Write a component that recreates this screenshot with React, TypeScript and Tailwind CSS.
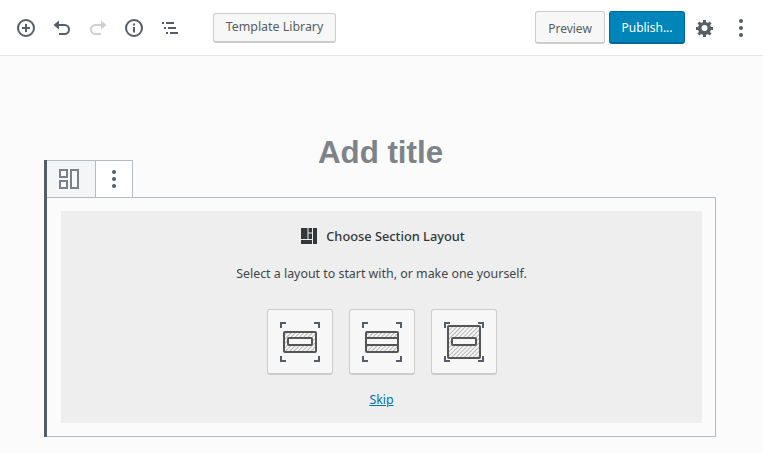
import type { ReactNode } from "react";

const baseFont = "font-['Noto_Sans','Open_Sans',sans-serif]";
const layoutButtonClassName =
  "flex h-[66px] w-[66px] items-center justify-center rounded-[3px] border border-[#cccccc] border-b-2 bg-[#f7f7f7]";

const Corners = () => (
  <g fill="none" stroke="#555d66" strokeWidth="2">
    <path d="M1 6V1H6" />
    <path d="M34 1H39V6" />
    <path d="M1 34V39H6" />
    <path d="M34 39H39V34" />
  </g>
);

const Hatch = ({ id }: { id: string }) => (
  <defs>
    <pattern id={id} width="3" height="3" patternUnits="userSpaceOnUse" patternTransform="rotate(45)">
      <rect width="3" height="3" fill="#f7f7f7" />
      <rect width="1" height="3" fill="#b4b4b4" />
    </pattern>
  </defs>
);

const ContainedIcon = () => (
  <svg width="40" height="40" viewBox="0 0 40 40">
    <Hatch id="hatch-a" />
    <Corners />
    <rect x="4" y="10" width="32" height="20" rx="1" fill="url(#hatch-a)" stroke="#555555" strokeWidth="2" />
    <rect x="8" y="16" width="24" height="7" rx="1" fill="#f7f7f7" stroke="#555555" strokeWidth="2" />
  </svg>
);

const WideIcon = () => (
  <svg width="40" height="40" viewBox="0 0 40 40">
    <Hatch id="hatch-b" />
    <Corners />
    <rect x="4" y="10" width="32" height="20" rx="1" fill="url(#hatch-b)" stroke="#555555" strokeWidth="2" />
    <rect x="4" y="16" width="32" height="7" fill="#f7f7f7" stroke="#555555" strokeWidth="2" />
  </svg>
);

const FullIcon = () => (
  <svg width="40" height="40" viewBox="0 0 40 40">
    <Hatch id="hatch-c" />
    <Corners />
    <rect x="4" y="4" width="32" height="32" rx="1" fill="url(#hatch-c)" stroke="#555555" strokeWidth="2" />
    <rect x="8" y="16" width="24" height="7" rx="1" fill="#f7f7f7" stroke="#555555" strokeWidth="2" />
  </svg>
);

const ToolbarIcon = ({ children, color = "#555d66" }: { children: ReactNode; color?: string }) => (
  <svg width="20" height="20" viewBox="0 0 20 20" fill="none" stroke={color} strokeWidth="2">
    {children}
  </svg>
);

const Kebab = () => (
  <svg width="4" height="18" viewBox="0 0 4 18" fill="#555d66">
    <circle cx="2" cy="2" r="2" />
    <circle cx="2" cy="9" r="2" />
    <circle cx="2" cy="16" r="2" />
  </svg>
);

export default function App() {
  return (
    <div className={`${baseFont} flex h-[453px] w-[763px] flex-col overflow-hidden bg-[#fbfbfb]`}>
      <header className="flex h-[56px] shrink-0 items-center border-b border-[#e2e4e7] bg-white pl-4 pr-[20px]">
        <div className="flex w-[197px] items-center gap-[16px]">
          <ToolbarIcon>
            <circle cx="10" cy="10" r="8" />
            <path d="M10 6v8M6 10h8" />
          </ToolbarIcon>
          <ToolbarIcon>
            <path d="M6 7h6.500a4.500 4.500 0 0 1 0 9H7" />
            <path d="M7 2.500v9L1.500 7z" fill="#555d66" stroke="none" />
          </ToolbarIcon>
          <ToolbarIcon color="#ccd0d4">
            <path d="M14 7H7.500a4.500 4.500 0 0 0 0 9H13" />
            <path d="M13 2.500v9L18.500 7z" fill="#ccd0d4" stroke="none" />
          </ToolbarIcon>
          <ToolbarIcon>
            <circle cx="10" cy="10" r="8" />
            <path d="M10 9v5.500M10 5.500v2" />
          </ToolbarIcon>
          <ToolbarIcon>
            <path d="M2 5h2M6 5h8M4 10h2M8 10h8M6 15h2M10 15h8" />
          </ToolbarIcon>
        </div>
        <button className="h-[30px] w-[123px] rounded-[3px] border border-[#cccccc] border-b-2 bg-[#f7f7f7] pt-px text-[12.4px] text-[#555d66]">
          Template Library
        </button>
        <div className="ml-auto flex items-center">
          <button className="h-[33px] w-[70px] rounded-[3px] border border-[#cccccc] border-b-2 bg-[#f7f7f7] pt-1 text-[12px] text-[#555d66]">
            Preview
          </button>
          <button className="ml-1 h-[33px] w-[76px] rounded-[3px] border border-[#006799] border-b-2 bg-[#0085ba] pt-px text-[12px] text-white">
            Publish...
          </button>
          <svg className="ml-[10px]" width="20" height="20" viewBox="0 0 20 20" fill="#555d66">
            <path d="M18 12h-2.180c-.17.7-.44 1.350-.81 1.930l1.540 1.540-2.100 2.100-1.540-1.540c-.58.360-1.230.640-1.910.810V19H8v-2.180c-.68-.170-1.330-.450-1.910-.810l-1.540 1.540-2.120-2.120 1.540-1.540c-.36-.580-.640-1.230-.810-1.890H1V9h2.180c.170-.7.450-1.350.810-1.940L2.450 5.520l2.100-2.100 1.540 1.540c.58-.370 1.230-.640 1.910-.810V2h3v2.180c.68.170 1.330.440 1.910.810l1.540-1.540 2.120 2.120-1.540 1.540c.36.580.640 1.230.810 1.890H18v3zM9.500 13a3 3 0 1 0 0-6 3 3 0 0 0 0 6z" />
          </svg>
          <div className="ml-[24px] flex">
            <Kebab />
          </div>
        </div>
      </header>

      <main className="flex flex-1 flex-col pl-[44px] pr-[47px]">
        <h1 className="mt-[78px] h-[38px] pl-[1px] text-center font-['Liberation_Sans',sans-serif] text-[31.3px] leading-[38px] font-bold text-[#7e8389]">
          Add title
        </h1>
        <div className="mt-[-12px] flex h-[277px] flex-col border-l-[3px] border-[#555d66]">
          <div className="flex h-[37px] w-[86px] shrink-0 border-t border-r border-[#b5bcc2] bg-white">
            <div className="flex w-[49px] items-center justify-center border-r border-[#b5bcc2] bg-[#f3f5f6] pr-1">
              <svg width="20" height="20" viewBox="0 0 20 20" fill="#f8f9f9" stroke="#7b8187" strokeWidth="2">
                <rect x="1" y="1" width="7" height="7" />
                <rect x="1" y="12" width="7" height="7" />
                <rect x="12" y="1" width="7" height="18" />
              </svg>
            </div>
            <div className="flex flex-1 items-center justify-center">
              <Kebab />
            </div>
          </div>
          <section className="flex-1 border-t border-r border-b border-[#b0bbc2] bg-[#fbfbfb] pt-[13px] pr-[13px] pb-[13px] pl-[14px]">
            <div className="flex h-full flex-col items-center bg-[#eeeeee]">
              <div className="mt-[16px] flex items-center gap-[9px] pl-[3px]">
                <svg width="16" height="16" viewBox="0 0 16 16" fill="#32373c">
                  <path d="M0 0h6.500v11H0zM7.500 0H11v4.500H7.500zM7.500 5.500H11V11H7.500zM12 0h4v16h-4zM0 12h11v4H0z" />
                </svg>
                <h2 className="text-[12.8px] leading-[18px] font-medium text-[#32373c]">Choose Section Layout</h2>
              </div>
              <p className="mt-[20px] text-[12.4px] leading-[18px] text-[#40464d]">
                Select a layout to start with, or make one yourself.
              </p>
              <div className="mt-[26px] flex gap-4">
                <button className={layoutButtonClassName}>
                  <ContainedIcon />
                </button>
                <button className={layoutButtonClassName}>
                  <WideIcon />
                </button>
                <button className={layoutButtonClassName}>
                  <FullIcon />
                </button>
              </div>
              <a className="mt-[16px] text-[12.4px] leading-[18px] text-[#0073aa] underline" href="#">
                Skip
              </a>
            </div>
          </section>
        </div>
      </main>
    </div>
  );
}
